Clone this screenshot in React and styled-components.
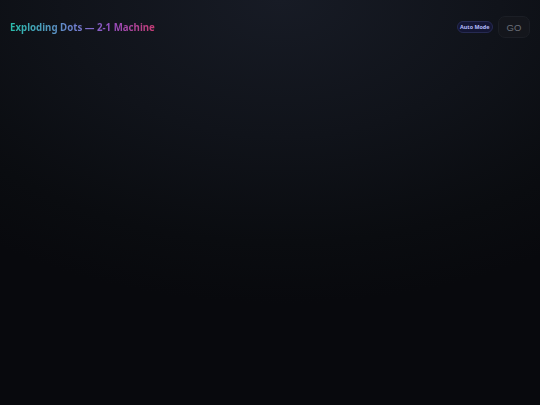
import styled, { createGlobalStyle } from "styled-components";

const Global = createGlobalStyle`
  html, body, #root {
    margin: 0;
    padding: 0;
    height: 100%;
  }
  body {
    background: #090b0f;
    font-family: "Noto Sans", "Open Sans", sans-serif;
  }
`;

const Page = styled.div`
  min-height: 100vh;
  background: radial-gradient(
    ellipse 90% 75% at 52% 0%,
    #171b25 0%,
    #10131a 45%,
    #0a0c10 80%,
    #08090d 100%
  );
`;

const Header = styled.header`
  display: flex;
  align-items: center;
  justify-content: space-between;
  padding: 16px 10px 0 10px;
  height: 22px;
`;

const Title = styled.h1`
  margin: 0;
  font-size: 9.7px;
  font-weight: 700;
  background: linear-gradient(90deg, #2dd4bf 0%, #7c8ee8 45%, #a855d8 70%, #e0417f 100%);
  -webkit-background-clip: text;
  background-clip: text;
  color: transparent;
  opacity: 0.88;
`;

const Controls = styled.div`
  display: flex;
  align-items: center;
  gap: 5px;
`;

const Badge = styled.span`
  display: inline-flex;
  align-items: center;
  height: 10px;
  padding: 0 2.5px;
  border-radius: 999px;
  background: #141634;
  border: 1px solid #262a52;
  color: #b4bcfb;
  font-size: 5.4px;
  font-weight: 700;
`;

const GoButton = styled.button`
  width: 32px;
  height: 22px;
  border-radius: 7px;
  border: 1px solid #1b1e25;
  background: #14161c;
  color: #6b6f78;
  font-family: "Liberation Sans", Arial, sans-serif;
  font-size: 9.5px;
  padding: 0;
  cursor: pointer;
`;

export default function App() {
  return (
    <>
      <Global />
      <Page>
        <Header>
          <Title>Exploding Dots — 2-1 Machine</Title>
          <Controls>
            <Badge>Auto Mode</Badge>
            <GoButton>GO</GoButton>
          </Controls>
        </Header>
      </Page>
    </>
  );
}
